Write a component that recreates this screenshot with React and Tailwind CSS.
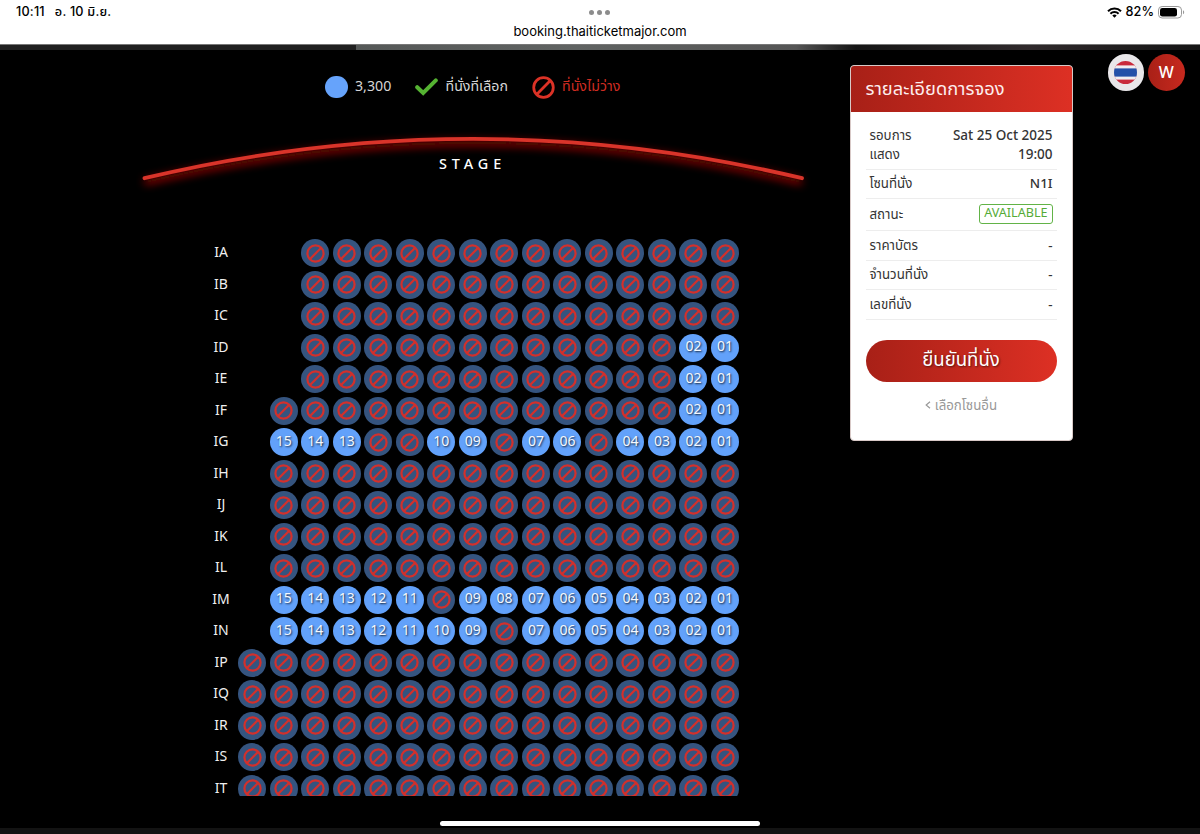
import React from "react";
import clsx from "clsx";

// x = sold, o = open. Seats are numbered right to left, starting at 01.
const ROWS = [
  { id: "IA", seats: "xxxxxxxxxxxxxx" },
  { id: "IB", seats: "xxxxxxxxxxxxxx" },
  { id: "IC", seats: "xxxxxxxxxxxxxx" },
  { id: "ID", seats: "xxxxxxxxxxxxoo" },
  { id: "IE", seats: "xxxxxxxxxxxxoo" },
  { id: "IF", seats: "xxxxxxxxxxxxxoo" },
  { id: "IG", seats: "oooxxooxooxoooo" },
  { id: "IH", seats: "xxxxxxxxxxxxxxx" },
  { id: "IJ", seats: "xxxxxxxxxxxxxxx" },
  { id: "IK", seats: "xxxxxxxxxxxxxxx" },
  { id: "IL", seats: "xxxxxxxxxxxxxxx" },
  { id: "IM", seats: "oooooxooooooooo" },
  { id: "IN", seats: "oooooooxooooooo" },
  { id: "IP", seats: "xxxxxxxxxxxxxxxx" },
  { id: "IQ", seats: "xxxxxxxxxxxxxxxx" },
  { id: "IR", seats: "xxxxxxxxxxxxxxxx" },
  { id: "IS", seats: "xxxxxxxxxxxxxxxx" },
  { id: "IT", seats: "xxxxxxxxxxxxxxxx" },
];

const DETAILS = [
  { label: "โซนที่นั่ง", value: "N1I", height: "h-[29px]" },
  { label: "สถานะ", value: "AVAILABLE", badge: true, height: "h-[32px]" },
  { label: "ราคาบัตร", value: "-", height: "h-[29.5px]" },
  { label: "จำนวนที่นั่ง", value: "-", height: "h-[29.5px]" },
  { label: "เลขที่นั่ง", value: "-", height: "h-[29.5px]" },
];

export default function App() {
  return (
    <div className="flex h-[834px] w-[1200px] flex-col overflow-hidden bg-black font-['Noto_Sans','Noto_Sans_Thai',sans-serif]">
      <StatusBar />
      <div className="flex h-[6px] shrink-0 border-t border-[#777]">
        <div className="w-[356px] bg-[#202020]" />
        <div className="grow bg-linear-to-r from-[#555857] via-[#606362] to-[#555]" />
        <div className="w-[60px] bg-linear-to-r from-[#555] to-[#151515]" />
        <div className="w-[344px] bg-linear-to-r from-[#151515] via-[#302a2c] to-[#151515]" />
      </div>

      <main className="flex min-h-0 grow">
        <section className="flex w-[849.5px] shrink-0 flex-col">
          <Legend />
          <Stage />
          <SeatMap />
        </section>
        <BookingPanel />
        <div className="ml-[35px] mt-[4px] flex gap-[4px]">
          <div className="flex size-[36.5px] items-center justify-center rounded-full bg-[#e9e7ea]">
            <ThaiFlag />
          </div>
          <div className="flex size-[36.5px] items-center justify-center rounded-full bg-linear-to-r from-[#a92017] to-[#c7291e] text-[16px] font-medium leading-none text-white">
            W
          </div>
        </div>
      </main>

      <footer className="flex h-[13px] shrink-0 flex-col items-center border-b-[6px] border-[#131313]">
        <div className="h-[5px] w-[320px] shrink-0 rounded-full bg-white" />
      </footer>
    </div>
  );
}

function StatusBar() {
  return (
    <header className="flex h-[44px] shrink-0 flex-col bg-white font-['Inter','Noto_Sans_Thai',sans-serif] text-black">
      <div className="grid h-[25px] grid-cols-3 items-center px-[14px] text-[12.7px] font-medium leading-none">
        <div className="flex gap-[10px] pl-[2px] tracking-[0.2px]">
          <span>10:11</span>
          <span>อ. 10 มิ.ย.</span>
        </div>
        <div className="flex justify-center gap-[3px]">
          <span className="size-[5px] rounded-full bg-[#8c8c8c]" />
          <span className="size-[5px] rounded-full bg-[#8c8c8c]" />
          <span className="size-[5px] rounded-full bg-[#8c8c8c]" />
        </div>
        <div className="flex items-center justify-end gap-[4px]">
          <svg width="15" height="11" viewBox="0 0 15 11" fill="none" stroke="#000" strokeWidth="2">
            <path d="M1 4.2a9.2 9.2 0 0 1 13 0M3.4 6.7a5.8 5.8 0 0 1 8.2 0" />
            <path d="M7.5 10.8 5.3 8.6a3.1 3.1 0 0 1 4.4 0Z" fill="#000" stroke="none" />
          </svg>
          <span>82%</span>
          <svg width="28" height="13" viewBox="0 0 28 13">
            <rect x="0.5" y="0.5" width="23" height="11.5" rx="3.6" fill="none" stroke="#999" />
            <rect x="2" y="2" width="17" height="8.5" rx="2.3" />
            <path d="M25 4.3c1.6.6 1.6 3.4 0 4Z" fill="#999" />
          </svg>
        </div>
      </div>
      <div className="text-center text-[13px] leading-[13px]">booking.thaiticketmajor.com</div>
    </header>
  );
}

function Legend() {
  return (
    <div className="ml-[325px] mt-[25px] flex h-[24px] items-center text-[14.2px] leading-[24px] text-[#d6d6d6]">
      <span className="size-[22.5px] rounded-full bg-[#66a3fb]" />
      <span className="ml-[7.5px] w-[60px] pb-[2px]">3,300</span>
      <svg width="23" height="18" viewBox="0 0 23 18" fill="none" stroke="#55b332" strokeWidth="4">
        <path d="M2.2 9.2 8.2 15 20.8 2.4" strokeLinecap="round" strokeLinejoin="miter" />
      </svg>
      <span className="ml-[7.5px] w-[86.5px] pb-[2px]">ที่นั่งที่เลือก</span>
      <BanIcon className="size-[23px] text-[#db3226]" stroke={2.9} />
      <span className="ml-[7px] pb-[2px] text-[#cf2c22]">ที่นั่งไม่ว่าง</span>
    </div>
  );
}

function BanIcon({ className, stroke }) {
  return (
    <svg className={className} viewBox="0 0 24 24" fill="none" stroke="currentColor" strokeWidth={stroke}>
      <circle cx="12" cy="12" r="10.2" />
      <path d="M4.8 19.2 19.2 4.8" />
    </svg>
  );
}

function Stage() {
  return (
    <div className="ml-[133px] mt-[27px] flex h-[113px] w-[680px] flex-col items-center">
      <svg className="shrink-0 overflow-visible" width="680" height="28" viewBox="0 0 680 28">
        <defs>
          <filter id="glow" x="-5%" y="-80%" width="110%" height="280%">
            <feGaussianBlur stdDeviation="4" />
          </filter>
        </defs>
        <path d="M11.5 52.2Q340-26.4 669 52.2" transform="translate(0 4)" fill="none" stroke="#960c05" strokeWidth="6" filter="url(#glow)" />
        <path d="M11.5 52.2Q340-26.4 669 52.2" fill="none" stroke="#d9342a" strokeWidth="3.8" strokeLinecap="round" />
      </svg>
      <div className="pr-[1px] text-[14.4px] font-medium leading-[20px] tracking-[4.9px] text-white">STAGE</div>
    </div>
  );
}

function SeatMap() {
  return (
    <div className="ml-[205px] h-[557px] w-[534px] overflow-hidden">
      {ROWS.map((row) => (
        <div key={row.id} className="flex h-[31.53px] items-start justify-between">
          <span className="w-[32px] text-center text-[14px] leading-[26px] text-[#efefef]">{row.id}</span>
          <div className="flex gap-[3.53px]">
            {row.seats.split("").map((state, i) => (
              <Seat key={i} open={state === "o"} number={row.seats.length - i} />
            ))}
          </div>
        </div>
      ))}
    </div>
  );
}

function Seat({ open, number }) {
  return (
    <div
      className={clsx(
        "flex size-[28px] items-center justify-center rounded-full",
        open ? "bg-[#62a1fa]" : "bg-[#35547f]"
      )}
    >
      {open ? (
        <span className="pb-[3px] text-[14px] leading-none text-[#f4f8ff] [text-shadow:1px_1px_2px_#000c]">
          {String(number).padStart(2, "0")}
        </span>
      ) : (
        <BanIcon className="size-[19px] text-[#d2302c]" stroke={2.8} />
      )}
    </div>
  );
}

function BookingPanel() {
  return (
    <aside className="mt-[15px] flex h-[376px] w-[223px] shrink-0 flex-col overflow-hidden rounded-[4px] border border-[#d8c9c7] bg-white text-[#343434]">
      <h2 className="flex h-[46px] shrink-0 items-center bg-linear-to-r from-[#a82017] to-[#dd3024] pb-[2px] pl-[15px] text-[18.3px] leading-none text-[#fdeeee]">
        รายละเอียดการจอง
      </h2>

      <div className="mx-[15px] mt-[12px] text-[13.3px] leading-[18.5px]">
        <div className="flex h-[46px] justify-between border-b border-[#ededed] px-[4px] pt-[2px]">
          <div>
            รอบการ
            <br />
            แสดง
          </div>
          <div className="text-right text-[13.5px] font-medium">
            Sat 25 Oct 2025
            <br />
            19:00
          </div>
        </div>
        {DETAILS.map((d) => (
          <div key={d.label} className={clsx("flex items-center justify-between border-b border-[#ededed] px-[4px] pb-[1px]", d.height)}>
            <span>{d.label}</span>
            {d.badge ? (
              <span className="flex h-[20px] items-center rounded-[3px] border border-[#62b347] px-[4px] pb-[1px] text-[12.6px] leading-none text-[#55ab38]">
                {d.value}
              </span>
            ) : (
              <span className="font-medium">{d.value}</span>
            )}
          </div>
        ))}
      </div>

      <button className="mx-[15px] mt-[20px] h-[42px] shrink-0 rounded-full bg-linear-to-r from-[#a82017] to-[#dd3024] pb-[3px] text-[18.6px] leading-none text-white [text-shadow:1px_1px_2px_#0008]">
        ยืนยันที่นั่ง
      </button>
      <a className="mt-[13px] flex items-center justify-center gap-[4px] text-[13.3px] leading-[20px] text-[#999]">
        <svg width="6" height="8" viewBox="0 0 6 8" fill="none" stroke="currentColor" strokeWidth="1.2">
          <path d="M5 .8 1.2 4 5 7.2" />
        </svg>
        เลือกโซนอื่น
      </a>
    </aside>
  );
}

function ThaiFlag() {
  return (
    <svg width="23" height="23" viewBox="0 0 23 23">
      <clipPath id="flag">
        <circle cx="11.5" cy="11.5" r="11.5" />
      </clipPath>
      <g clipPath="url(#flag)">
        <rect width="23" height="23" fill="#c92a3c" />
        <rect y="4.4" width="23" height="14.2" fill="#efedf1" />
        <rect y="7.4" width="23" height="8.2" fill="#2350a8" />
      </g>
    </svg>
  );
}
